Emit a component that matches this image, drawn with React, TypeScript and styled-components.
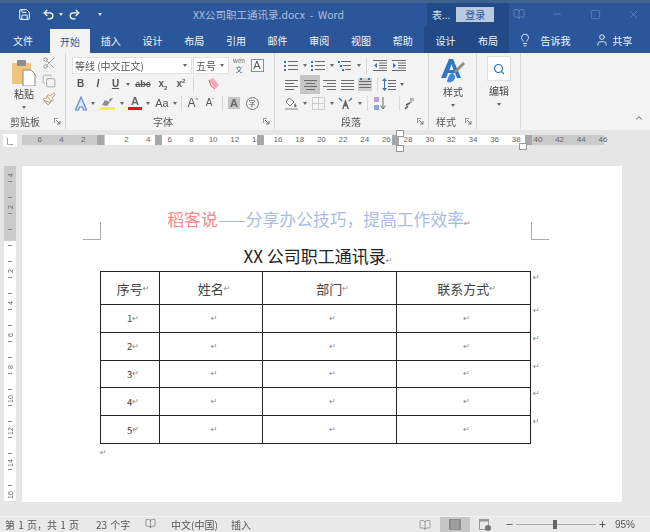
import React from 'react';
import styled, { createGlobalStyle } from 'styled-components';
import { Lightbulb, Minus, Redo2, Save, Scissors, Search, Square, Undo2, User, X, ChevronUp, Paintbrush, Copy, BookOpen, Plus } from 'lucide-react';

const FONT = '"Noto Sans CJK SC", "Liberation Sans", sans-serif';
const BLUE = '#2b579a';
const DARK_BLUE = '#214a86';
const BAND = '#e6e6e6';
const RIBBON = '#f3f3f3';
const ICON = '#6b6b6b';

const GlobalStyle = createGlobalStyle`
  html, body { margin: 0; padding: 0; background: ${BAND}; }
  body { font-family: ${FONT}; color: #444; overflow: hidden; }
`;

const Screen = styled.div`
  width: 650px;
  height: 532px;
  display: flex;
  flex-direction: column;
  overflow: hidden;
  filter: blur(0.45px);
`;

/* title bar */
const TitleBar = styled.div`
  height: 27px;
  flex: none;
  display: flex;
  align-items: center;
  background: ${BLUE};
  border-top: 3px solid #3f628f;
  padding-bottom: 2px;
  box-sizing: border-box;
  color: #fff;
`;

const QuickAccess = styled.div`
  width: 130px;
  flex: none;
  display: flex;
  align-items: center;
  padding-left: 16px;
  box-sizing: border-box;
  gap: 3px;
`;

const QuickButton = styled.span<{ $w: number }>`
  width: ${(p) => p.$w}px;
  display: flex;
  align-items: center;
  justify-content: center;
  flex: none;
`;

const Caret = styled.i<{ $color?: string }>`
  display: inline-block;
  flex: none;
  width: 0;
  height: 0;
  border-left: 2.5px solid transparent;
  border-right: 2.5px solid transparent;
  border-top: 3px solid ${(p) => p.$color || '#666'};
`;

const DocName = styled.div`
  width: 277px;
  flex: none;
  text-align: center;
  font-size: 10.5px;
  color: #aebfdb;
  white-space: pre;
`;

const ContextTitle = styled.div`
  width: 82px;
  flex: none;
  align-self: stretch;
  margin: 0 0 -2px 20px;
  display: flex;
  align-items: center;
  background: ${DARK_BLUE};
  font-size: 10px;
  color: #dfe6f1;
  padding: 0 0 2px 5px;
  box-sizing: border-box;
`;

const LoginButton = styled.span`
  width: 38px;
  height: 15px;
  margin-left: 6px;
  background: #b8c9e2;
  color: #2b579a;
  font-size: 10px;
  line-height: 15px;
  text-align: center;
`;

const WindowControls = styled.div`
  flex: 1;
  display: flex;
  align-items: center;
  gap: 24px;
  padding-left: 3px;
  color: #6f8fbe;
`;

const WindowButton = styled.span`
  width: 14px;
  flex: none;
  display: flex;
  justify-content: center;
`;

/* tabs */
const TabBar = styled.div`
  height: 26px;
  flex: none;
  display: flex;
  background: ${BLUE};
  color: #f2f5fa;
  font-size: 10px;
`;

const Tab = styled.div<{ $active?: boolean; $dark?: boolean; $w?: number; $shift?: number }>`
  width: ${(p) => p.$w || 41.7}px;
  flex: none;
  box-sizing: border-box;
  padding-right: ${(p) => p.$shift || 0}px;
  display: flex;
  align-items: center;
  justify-content: center;
  background: ${(p) => (p.$active ? RIBBON : p.$dark ? DARK_BLUE : 'transparent')};
  color: ${(p) => (p.$active ? '#2b579a' : '#f2f5fa')};
  margin-top: ${(p) => (p.$active ? '2px' : 0)};
`;

const TabAside = styled.div<{ $left: number; $gap: number }>`
  display: flex;
  align-items: center;
  gap: ${(p) => p.$gap}px;
  margin-left: ${(p) => p.$left}px;
`;

/* ribbon */
const Ribbon = styled.div`
  height: 77px;
  flex: none;
  display: flex;
  background: ${RIBBON};
  position: relative;
`;

const Group = styled.div<{ $w: number }>`
  width: ${(p) => p.$w}px;
  flex: none;
  box-sizing: border-box;
  border-right: 1px solid #d6d6d6;
  margin-bottom: 1px;
  display: flex;
  flex-direction: column;
`;

const GroupBody = styled.div`
  flex: 1;
  display: flex;
  min-height: 0;
`;

const GroupLabel = styled.div<{ $pad?: number }>`
  height: 16px;
  display: flex;
  align-items: center;
  justify-content: space-between;
  font-size: 10px;
  color: #555;
  padding: 0 4px 0 ${(p) => p.$pad || 0}px;
`;

const Launcher = styled.svg`
  width: 7px;
  height: 7px;
  flex: none;
`;

const BigCol = styled.div<{ $w: number }>`
  width: ${(p) => p.$w}px;
  flex: none;
  display: flex;
  flex-direction: column;
  align-items: center;
  padding-top: 6px;
  box-sizing: border-box;
  font-size: 10px;
  color: #444;
`;

const BigName = styled.span`
  line-height: 14px;
  margin-top: 1px;
  margin-bottom: 5px;
`;

const SmallCol = styled.div`
  width: 18px;
  flex: none;
  margin-left: -8px;
  display: flex;
  flex-direction: column;
  align-items: center;
  gap: 4px;
  padding-top: 3px;
  color: #8a8a8a;
`;

const Rows = styled.div<{ $left: number }>`
  padding: 2.5px 0 0 ${(p) => p.$left}px;
  display: flex;
  flex-direction: column;
`;

const ToolRow = styled.div`
  height: 19px;
  display: flex;
  align-items: center;
`;

const Combo = styled.div<{ $w: number }>`
  width: ${(p) => p.$w}px;
  height: 17px;
  margin-right: 1px;
  flex: none;
  box-sizing: border-box;
  background: #fff;
  border: 1px solid #e2e2e2;
  display: flex;
  align-items: center;
  justify-content: space-between;
  padding: 0 4px 0 2px;
  font-size: 10px;
  color: #555;
`;

const Tool = styled.span<{ $w: number; $on?: boolean }>`
  width: ${(p) => p.$w}px;
  height: 19px;
  flex: none;
  display: flex;
  align-items: center;
  justify-content: center;
  background: ${(p) => (p.$on ? '#c6c6c6' : 'transparent')};
  color: #555;
`;

const Letter = styled.span<{ $size?: number; $weight?: number; $italic?: boolean; $color?: string; $under?: boolean; $strike?: boolean }>`
  font-family: "Liberation Sans", sans-serif;
  font-size: ${(p) => p.$size || 10}px;
  font-weight: ${(p) => p.$weight || 400};
  font-style: ${(p) => (p.$italic ? 'italic' : 'normal')};
  color: ${(p) => p.$color || '#555'};
  text-decoration: ${(p) => (p.$under ? 'underline' : p.$strike ? 'line-through' : 'none')};
  line-height: 1;
`;

const Sub = styled.sub`
  font-size: 6px;
  line-height: 0;
`;

const Sup = styled.sup`
  font-size: 6px;
  line-height: 0;
`;

const BoxedLetter = styled.span`
  width: 13px;
  height: 13px;
  box-sizing: border-box;
  border: 1px solid #7a8fb0;
  display: flex;
  align-items: center;
  justify-content: center;
  font-family: "Liberation Sans", sans-serif;
  font-size: 11px;
  color: #555;
  background: #fff;
`;

const ShadedLetter = styled.span`
  width: 12px;
  height: 12px;
  background: #c4c4c4;
  display: flex;
  align-items: center;
  justify-content: center;
  font-family: "Liberation Sans", sans-serif;
  font-weight: 700;
  font-size: 11px;
  color: #666;
`;

const CircledChar = styled.span`
  width: 13px;
  height: 13px;
  box-sizing: border-box;
  border: 1px solid #777;
  border-radius: 50%;
  font-size: 7px;
  line-height: 11px;
  text-align: center;
  color: #555;
`;

const ColorLetter = styled.span<{ $bar: string }>`
  width: 14px;
  display: flex;
  flex-direction: column;
  align-items: center;
  font-family: "Liberation Sans", sans-serif;
  font-size: 11px;
  font-weight: 700;
  line-height: 11px;
  color: #666;
  &::after {
    content: '';
    width: 14px;
    height: 3px;
    background: ${(p) => p.$bar};
  }
`;

const WenIcon = styled.span`
  display: flex;
  flex-direction: column;
  align-items: center;
  font-size: 6px;
  line-height: 8px;
  color: #666;
`;

const WenChar = styled.span`
  color: #3a66a8;
  font-size: 7px;
  line-height: 8px;
`;

const RowGap = styled.span<{ $w: number }>`
  width: ${(p) => p.$w}px;
  flex: none;
`;

const RowDivider = styled.span`
  width: 1px;
  height: 15px;
  flex: none;
  background: #d8d8d8;
  margin: 0 3px;
`;

const EditBox = styled.div`
  width: 24px;
  height: 25px;
  margin-top: -3px;
  margin-bottom: 2px;
  background: #fff;
  border: 1px solid #e0e0e0;
  box-sizing: border-box;
  display: flex;
  align-items: center;
  justify-content: center;
`;

const Collapse = styled.span`
  position: absolute;
  right: 6px;
  bottom: 2px;
  color: #777;
`;

/* horizontal ruler */
const RulerBand = styled.div`
  height: 36px;
  flex: none;
  background: ${BAND};
  padding-top: 5px;
  box-sizing: border-box;
  display: flex;
`;

const TabSelector = styled.div`
  width: 14px;
  height: 13px;
  margin: -1px 5px 0 3px;
  flex: none;
  background: #fff;
  display: flex;
  align-items: center;
  justify-content: center;
  color: #555;
  font-size: 8px;
`;

const RulerTrack = styled.div`
  width: 600px;
  height: 10px;
  flex: none;
  position: relative;
  display: flex;
  padding-left: 7px;
  box-sizing: border-box;
  background: linear-gradient(
    to right,
    #cbcbcb 0,
    #cbcbcb 83px,
    #fff 83px,
    #fff 503px,
    #cbcbcb 503px,
    #cbcbcb 582px,
    ${BAND} 582px
  );
`;

const RulerTick = styled.span`
  width: 21.67px;
  flex: none;
  text-align: center;
  font-family: "Liberation Sans", sans-serif;
  font-size: 8px;
  line-height: 10px;
  color: #666;
`;

const RulerCell = styled.span<{ $x: number }>`
  position: absolute;
  left: ${(p) => p.$x}px;
  top: 0;
  width: 7px;
  height: 10px;
  background: #a8a8a8;
`;

const IndentMark = styled.span<{ $x: number; $top: number }>`
  position: absolute;
  left: ${(p) => p.$x}px;
  top: ${(p) => p.$top}px;
  width: 6px;
  height: 5px;
  background: #fff;
  border: 1px solid #999;
`;

/* document */
const DocArea = styled.div`
  flex: 1;
  min-height: 0;
  display: flex;
  background: ${BAND};
`;

const VRuler = styled.div`
  width: 12px;
  height: 335px;
  flex: none;
  margin: 0 6px 0 4px;
  display: flex;
  flex-direction: column;
  align-items: center;
  background:
    repeating-linear-gradient(to bottom, transparent 0, transparent 15px, #888 15px, #888 16px) 4px 0 / 4px 100% no-repeat,
    linear-gradient(to bottom, #cbcbcb 0, #cbcbcb 75px, #fff 75px, #fff 100%);
`;

const VTick = styled.span`
  height: 32px;
  flex: none;
  writing-mode: vertical-rl;
  transform: rotate(180deg);
  display: flex;
  align-items: center;
  justify-content: center;
  font-family: "Liberation Sans", sans-serif;
  font-size: 7px;
  color: #666;
  &:first-child { margin-top: -7px; }
`;

const Page = styled.div`
  width: 600px;
  height: 336px;
  flex: none;
  background: #fff;
  box-sizing: border-box;
  padding-top: 43px;
  position: relative;
`;

const CropMark = styled.span<{ $side: 'left' | 'right' }>`
  position: absolute;
  top: 56px;
  width: 17px;
  height: 17px;
  border-bottom: 1px solid #aaa;
  ${(p) => (p.$side === 'left' ? 'left: 61px; border-right: 1px solid #aaa;' : 'left: 509px; border-left: 1px solid #aaa;')}
`;

const HeaderLine = styled.div`
  height: 20px;
  line-height: 20px;
  text-align: center;
  font-size: 16.8px;
  color: #a9bde3;
  white-space: nowrap;
  padding-right: 6px;
`;

const Brand = styled.span`
  color: #f4898a;
`;

const Heading = styled.div`
  margin-top: 17px;
  height: 25px;
  line-height: 20px;
  text-align: center;
  font-size: 17px;
  color: #222;
  padding-right: 8px;
`;

const Mark = styled.span`
  font-family: "DejaVu Sans", sans-serif;
  font-size: 8px;
  color: #888;
`;

const Table = styled.div`
  width: 431px;
  margin-left: 78px;
  box-sizing: border-box;
  border-top: 1px solid #222;
  border-left: 1px solid #222;
`;

const TableRow = styled.div<{ $h: number }>`
  height: ${(p) => p.$h}px;
  display: grid;
  grid-template-columns: 59px 103px 134px 134px;
  position: relative;
  box-sizing: border-box;
  border-bottom: 1px solid #222;
`;

const Cell = styled.div<{ $head?: boolean }>`
  display: flex;
  align-items: center;
  justify-content: center;
  padding-left: 6px;
  border-right: 1px solid #222;
  font-size: ${(p) => (p.$head ? '13px' : '9.5px')};
  color: #444;
  white-space: nowrap;
`;

const RowEnd = styled(Mark)`
  position: absolute;
  left: 432px;
  top: 1px;
`;

const AfterTable = styled.div`
  margin: 0 0 0 78px;
  line-height: 8px;
`;

/* status bar */
const StatusBar = styled.div`
  height: 16px;
  flex: none;
  background: #e9e9e9;
  border-top: 1px solid #f2f2f2;
  display: flex;
  align-items: center;
  font-size: 10px;
  color: #555;
  box-sizing: border-box;
`;

const StatusText = styled.span<{ $w: number }>`
  width: ${(p) => p.$w}px;
  flex: none;
  white-space: nowrap;
  word-spacing: 1px;
`;

const ViewButton = styled.span<{ $on?: boolean }>`
  width: 30px;
  height: 16px;
  flex: none;
  display: flex;
  align-items: center;
  justify-content: center;
  background: ${(p) => (p.$on ? '#c6c6c6' : 'transparent')};
  color: #777;
`;

const ZoomSlider = styled.div`
  width: 80px;
  height: 1px;
  margin: 0 2px;
  flex: none;
  background: #aaa;
  position: relative;
`;

const ZoomThumb = styled.span`
  position: absolute;
  left: 37px;
  top: -4px;
  width: 4px;
  height: 9px;
  background: #666;
`;

const ZoomPercent = styled.span`
  font-family: "Liberation Sans", sans-serif;
  font-size: 10px;
  margin-left: 8px;
`;

const ListIcon = ({ kind }: { kind: 'bullet' | 'number' | 'multi' }) => (
  <svg width="14" height="13" viewBox="0 0 14 13">
    {[2, 6, 10].map((y, i) => (
      <React.Fragment key={y}>
        <rect x={kind === 'multi' ? i * 2 : 0} y={y} width="2" height="2" fill="#3f6fb5" />
        <rect x={kind === 'multi' ? 3 + i * 2 : 4} y={y} width={kind === 'multi' ? 10 - i * 2 : 10} height="1" fill={ICON} />
      </React.Fragment>
    ))}
  </svg>
);

const AlignIcon = ({ mode }: { mode: 'left' | 'center' | 'right' | 'just' }) => {
  const widths = mode === 'just' ? [13, 13, 13, 13] : [13, 9, 13, 9];
  return (
    <svg width="13" height="11" viewBox="0 0 13 11">
      {widths.map((w, i) => (
        <rect
          key={i}
          x={mode === 'left' || mode === 'just' ? 0 : mode === 'center' ? (13 - w) / 2 : 13 - w}
          y={1 + i * 3}
          width={w}
          height="1"
          fill={ICON}
        />
      ))}
    </svg>
  );
};

const IndentIcon = ({ flip }: { flip?: boolean }) => (
  <svg width="14" height="11" viewBox="0 0 14 11">
    {[0, 2.5, 5, 7.5, 10].map((y) => (
      <rect key={y} x={y === 0 || y === 10 ? 0 : 6} y={y} width={y === 0 || y === 10 ? 14 : 8} height="1" fill={ICON} />
    ))}
    <path d={flip ? 'M1 3l3 2.500L1 8z' : 'M4 3L1 5.500 4 8z'} fill="#3f6fb5" />
  </svg>
);

const DistributedIcon = () => (
  <svg width="14" height="13" viewBox="0 0 14 13">
    <rect width="14" height="13" fill="#d0d0d0" />
    {[3, 6, 9].map((y) => (
      <rect key={y} x="1" y={y} width="12" height="1" fill={ICON} />
    ))}
    <path d="M2 0h2v2H2zM10 0h2v2h-2z" fill="#3f6fb5" />
  </svg>
);

const LineSpacingIcon = () => (
  <svg width="14" height="13" viewBox="0 0 14 13">
    {[2, 5, 8, 11].map((y) => (
      <rect key={y} x="6" y={y} width="8" height="1" fill={ICON} />
    ))}
    <path d="M2.500 0L5 3H0zM2.500 13L0 10h5zM2 3h1v7H2z" fill="#3f6fb5" />
  </svg>
);

const ShadingIcon = () => (
  <svg width="15" height="15" viewBox="0 0 15 15">
    <path d="M5 2l5 4-4 4-4-4z" fill="#fff" stroke="#777" />
    <path d="M11 7c1 1.500 1.500 2 1.500 3a1.200 1.200 0 0 1-2.400 0c0-1 .4-1.500.9-3z" fill="#777" />
    <rect x="1" y="12" width="13" height="2" fill="#bbb" />
  </svg>
);

const BorderIcon = () => (
  <svg width="13" height="13" viewBox="0 0 13 13" fill="none" stroke="#aaa" strokeDasharray="1 1">
    <rect x="0.5" y="0.5" width="12" height="12" />
    <path d="M6.500.5v12M.5 6.500h12" />
  </svg>
);

const LayoutIcon = () => (
  <svg width="15" height="13" viewBox="0 0 15 13">
    <path d="M7.500 2L4 12h1.600l.8-2.500h2.200l.8 2.500H11z" fill="#666" />
    <path d="M1 1l3 3M14 1l-3 3" stroke="#3f6fb5" strokeWidth="1.200" />
  </svg>
);

const SortIcon = () => (
  <svg width="14" height="15" viewBox="0 0 14 15">
    <rect x="1" y="1" width="5" height="5" fill="#b7a3d6" />
    <rect x="1" y="9" width="5" height="5" fill="#8fa6d0" />
    <path d="M10 1v11M7.500 9.500L10 13l2.500-3.500" fill="none" stroke="#666" />
  </svg>
);

const PilcrowIcon = () => (
  <svg width="11" height="13" viewBox="0 0 11 13">
    <path d="M7 1v5M9 1v3" stroke="#777" />
    <path d="M2 8l4-2M1 12l3-3" stroke="#555" strokeWidth="1.500" />
  </svg>
);

const EraserIcon = () => (
  <svg width="14" height="15" viewBox="0 0 14 15">
    <path d="M2 3l4-2 6 7-4 4z" fill="#f2a7c0" />
    <path d="M2 3l2 6 4 3" fill="none" stroke="#c66" />
  </svg>
);

const OutlineA = () => (
  <svg width="14" height="15" viewBox="0 0 14 15">
    <path d="M7 1L1.500 14h3l1-3h3l1 3h3z" fill="#dbe6f6" stroke="#5d8ed1" strokeWidth="1.200" />
  </svg>
);

const HighlightIcon = () => (
  <svg width="15" height="15" viewBox="0 0 15 15">
    <path d="M2 9l3-5 5 2-3 4z" fill="#8d8d8d" />
    <path d="M9 3l4-1-3 4z" fill="#777" />
    <rect y="11" width="15" height="3" fill="#f6f03a" />
  </svg>
);

const PasteIcon = () => (
  <svg width="25" height="27" viewBox="0 0 25 27">
    <rect x="0" y="4" width="19" height="21" rx="1" fill="#eec57c" />
    <rect x="5" y="1" width="9" height="6" rx="1" fill="#8e8e8e" />
    <path d="M11 11h8l4 4v12H11z" fill="#fff" stroke="#888" />
  </svg>
);

const StyleIcon = () => (
  <svg width="24" height="25" viewBox="0 0 24 25">
    <path fillRule="evenodd" d="M8 0h4l8 19h-4l-2-5H7l-2 5H0zM8.500 11h4L10.500 5z" fill="#2f75c4" />
    <path d="M22 3l2 2-9 9-2-2z" fill="#8c8c8c" />
    <path d="M12 14c-3 0-5 3-6 9 5 1 8-1 8-6z" fill="#3f8ad8" />
  </svg>
);

const LauncherMark = () => (
  <Launcher viewBox="0 0 7 7">
    <path d="M0 .5h4M.5 0v5" stroke="#999" fill="none" />
    <path d="M2 2l4 4M6 3v3H3" stroke="#777" fill="none" />
  </Launcher>
);

const PrintLayoutIcon = () => (
  <svg width="12" height="11" viewBox="0 0 12 11">
    <rect width="12" height="11" fill="#8c8c8c" />
    <rect x="2" y="1" width="8" height="9" fill="#9e9e9e" />
  </svg>
);

const WebLayoutIcon = () => (
  <svg width="12" height="12" viewBox="0 0 12 12">
    <rect x="0.500" y="0.500" width="9" height="10" fill="none" stroke="#999" />
    <rect x="0.500" y="0.500" width="9" height="2" fill="#999" />
    <circle cx="9" cy="9" r="3" fill="#777" />
  </svg>
);

const ret = <Mark>↵</Mark>;

const topTabs = ['插入', '设计', '布局', '引用', '邮件', '审阅', '视图', '帮助'];
const hTicks = ['6', '4', '2', '', '2', '4', '6', '8', '10', '12', '14', '16', '18', '20', '22', '24', '26', '28', '30', '32', '34', '36', '38', '40', '42', '44', '46'];
const vTicks = ['4', '2', '', '2', '4', '6', '8', '10', '12', '14', '16'];
const rows = ['1', '2', '3', '4', '5'];

const App = () => {
  return (
    <Screen>
      <GlobalStyle />
      <TitleBar>
        <QuickAccess>
          <QuickButton $w={16}><Save size={13} strokeWidth={1.8} /></QuickButton>
          <RowGap $w={2} />
          <QuickButton $w={16}><Undo2 size={13} strokeWidth={2.4} /></QuickButton>
          <Caret $color="#dfe6f1" />
          <QuickButton $w={16}><Redo2 size={13} strokeWidth={2.4} /></QuickButton>
          <RowGap $w={10} />
          <Caret $color="#dfe6f1" />
        </QuickAccess>
        <DocName>XX公司职工通讯录.docx  -  Word</DocName>
        <ContextTitle>
          表...
          <LoginButton>登录</LoginButton>
        </ContextTitle>
        <WindowControls>
          <WindowButton><BookOpen size={12} strokeWidth={1.4} /></WindowButton>
          <WindowButton><Minus size={12} strokeWidth={1.4} /></WindowButton>
          <WindowButton><Square size={11} strokeWidth={1.4} /></WindowButton>
          <WindowButton><X size={13} strokeWidth={1.4} /></WindowButton>
        </WindowControls>
      </TitleBar>
      <TabBar>
        <Tab $w={50} $shift={4}>文件</Tab>
        <Tab $w={40} $active>开始</Tab>
        {topTabs.map((t) => (
          <Tab key={t}>{t}</Tab>
        ))}
        <Tab $dark $w={44}>设计</Tab>
        <Tab $dark $w={41}>布局</Tab>
        <TabAside $left={9} $gap={9}>
          <Lightbulb size={14} strokeWidth={1.5} />
          <span>告诉我</span>
        </TabAside>
        <TabAside $left={24} $gap={4}>
          <User size={14} strokeWidth={1.5} />
          <span>共享</span>
        </TabAside>
      </TabBar>
      <Ribbon>
        <Group $w={66}>
          <GroupBody>
            <BigCol $w={48}>
              <PasteIcon />
              <BigName>粘贴</BigName>
              <Caret />
            </BigCol>
            <SmallCol>
              <Scissors size={14} strokeWidth={1.4} />
              <Copy size={14} strokeWidth={1.2} />
              <Paintbrush size={14} strokeWidth={1.6} color="#a98d58" />
            </SmallCol>
          </GroupBody>
          <GroupLabel $pad={10}>剪贴板<LauncherMark /></GroupLabel>
        </Group>
        <Group $w={209}>
          <GroupBody>
            <Rows $left={6}>
              <ToolRow>
                <Combo $w={120}>等线 (中文正文)<Caret /></Combo>
                <Combo $w={36}>五号<Caret /></Combo>
                <Tool $w={18}><WenIcon>wén<WenChar>文</WenChar></WenIcon></Tool>
                <Tool $w={18}><BoxedLetter>A</BoxedLetter></Tool>
              </ToolRow>
              <ToolRow>
                <Tool $w={17}><Letter $weight={700}>B</Letter></Tool>
                <Tool $w={18}><Letter $weight={700} $italic>I</Letter></Tool>
                <Tool $w={17}><Letter $weight={700} $under>U</Letter></Tool>
                <Tool $w={8}><Caret /></Tool>
                <Tool $w={22}><Letter $size={9} $weight={700} $strike>abc</Letter></Tool>
                <Tool $w={18}><Letter $weight={700}>x<Sub>2</Sub></Letter></Tool>
                <Tool $w={18}><Letter $weight={700}>x<Sup>2</Sup></Letter></Tool>
                <RowDivider />
                <RowGap $w={10} />
                <Tool $w={14}><EraserIcon /></Tool>
              </ToolRow>
              <ToolRow>
                <Tool $w={17}><OutlineA /></Tool>
                <Tool $w={8}><Caret /></Tool>
                <Tool $w={20}><HighlightIcon /></Tool>
                <Tool $w={9}><Caret /></Tool>
                <Tool $w={18}><ColorLetter $bar="#e81123">A</ColorLetter></Tool>
                <Tool $w={8}><Caret /></Tool>
                <Tool $w={20}><Letter $size={11}>Aa</Letter></Tool>
                <Tool $w={6}><Caret /></Tool>
                <RowDivider />
                <Tool $w={16}><Letter $size={12}>A<Sup>^</Sup></Letter></Tool>
                <Tool $w={18}><Letter $size={10}>A<Sup>ˇ</Sup></Letter></Tool>
                <RowDivider />
                <Tool $w={16}><ShadedLetter>A</ShadedLetter></Tool>
                <Tool $w={20}><CircledChar>字</CircledChar></Tool>
              </ToolRow>
            </Rows>
          </GroupBody>
          <GroupLabel $pad={87}>字体<LauncherMark /></GroupLabel>
        </Group>
        <Group $w={154}>
          <GroupBody>
            <Rows $left={7}>
              <ToolRow>
                <Tool $w={18}><ListIcon kind="bullet" /></Tool>
                <Tool $w={9}><Caret /></Tool>
                <Tool $w={18}><ListIcon kind="number" /></Tool>
                <Tool $w={9}><Caret /></Tool>
                <Tool $w={18}><ListIcon kind="multi" /></Tool>
                <Tool $w={9}><Caret /></Tool>
                <RowDivider />
                <Tool $w={19}><IndentIcon /></Tool>
                <Tool $w={19}><IndentIcon flip /></Tool>
              </ToolRow>
              <ToolRow>
                <Tool $w={18}><AlignIcon mode="left" /></Tool>
                <Tool $w={20} $on><AlignIcon mode="center" /></Tool>
                <Tool $w={18}><AlignIcon mode="right" /></Tool>
                <Tool $w={18}><AlignIcon mode="just" /></Tool>
                <Tool $w={18}><DistributedIcon /></Tool>
                <RowDivider />
                <Tool $w={16}><LineSpacingIcon /></Tool>
                <Tool $w={9}><Caret /></Tool>
              </ToolRow>
              <ToolRow>
                <Tool $w={18}><ShadingIcon /></Tool>
                <Tool $w={9}><Caret /></Tool>
                <Tool $w={18}><BorderIcon /></Tool>
                <Tool $w={9}><Caret /></Tool>
                <Tool $w={19}><LayoutIcon /></Tool>
                <Tool $w={9}><Caret /></Tool>
                <RowDivider />
                <Tool $w={17}><SortIcon /></Tool>
                <RowGap $w={8} />
                <RowDivider />
                <Tool $w={12}><PilcrowIcon /></Tool>
              </ToolRow>
            </Rows>
          </GroupBody>
          <GroupLabel $pad={66}>段落<LauncherMark /></GroupLabel>
        </Group>
        <Group $w={48}>
          <GroupBody>
            <BigCol $w={48}>
              <StyleIcon />
              <BigName>样式</BigName>
              <Caret />
            </BigCol>
          </GroupBody>
          <GroupLabel $pad={7}>样式<LauncherMark /></GroupLabel>
        </Group>
        <Group $w={44}>
          <GroupBody>
            <BigCol $w={44}>
              <EditBox><Search size={12} strokeWidth={2.4} color="#2f6fb7" /></EditBox>
              <BigName>编辑</BigName>
              <Caret />
            </BigCol>
          </GroupBody>
        </Group>
        <Collapse><ChevronUp size={10} strokeWidth={2.5} /></Collapse>
      </Ribbon>
      <RulerBand>
        <TabSelector>∟</TabSelector>
        <RulerTrack>
          {hTicks.map((t, i) => (
            <RulerTick key={i}>{t}</RulerTick>
          ))}
          <RulerCell $x={75} />
          <RulerCell $x={133} />
          <RulerCell $x={235} />
          <RulerCell $x={370} />
          <RulerCell $x={503} />
          <IndentMark $x={374} $top={-5} />
          <IndentMark $x={374} $top={10} />
          <IndentMark $x={497} $top={8} />
        </RulerTrack>
      </RulerBand>
      <DocArea>
        <VRuler>
          {vTicks.map((t, i) => (
            <VTick key={i}>{t}</VTick>
          ))}
        </VRuler>
        <Page>
          <CropMark $side="left" />
          <CropMark $side="right" />
          <HeaderLine>
            <Brand>稻客说</Brand>——分享办公技巧，提高工作效率{ret}
          </HeaderLine>
          <Heading>XX 公司职工通讯录{ret}</Heading>
          <Table>
            <TableRow $h={33}>
              <Cell $head>序号{ret}</Cell>
              <Cell $head>姓名{ret}</Cell>
              <Cell $head>部门{ret}</Cell>
              <Cell $head>联系方式{ret}</Cell>
              <RowEnd>↵</RowEnd>
            </TableRow>
            {rows.map((r) => (
              <TableRow key={r} $h={27.8}>
                <Cell>{r}{ret}</Cell>
                <Cell>{ret}</Cell>
                <Cell>{ret}</Cell>
                <Cell>{ret}</Cell>
                <RowEnd>↵</RowEnd>
              </TableRow>
            ))}
          </Table>
          <AfterTable>{ret}</AfterTable>
        </Page>
      </DocArea>
      <StatusBar>
        <RowGap $w={5} />
        <StatusText $w={91}>第 1 页，共 1 页</StatusText>
        <StatusText $w={49}>23 个字</StatusText>
        <StatusText $w={26}><BookOpen size={11} strokeWidth={1.2} /></StatusText>
        <StatusText $w={60}>中文(中国)</StatusText>
        <StatusText $w={179}>插入</StatusText>
        <ViewButton><BookOpen size={12} strokeWidth={1.3} /></ViewButton>
        <ViewButton $on><PrintLayoutIcon /></ViewButton>
        <ViewButton><WebLayoutIcon /></ViewButton>
        <RowGap $w={5} />
        <Minus size={9} strokeWidth={2.5} />
        <ZoomSlider><ZoomThumb /></ZoomSlider>
        <Plus size={9} strokeWidth={2.5} />
        <ZoomPercent>95%</ZoomPercent>
      </StatusBar>
    </Screen>
  );
};

export default App;
